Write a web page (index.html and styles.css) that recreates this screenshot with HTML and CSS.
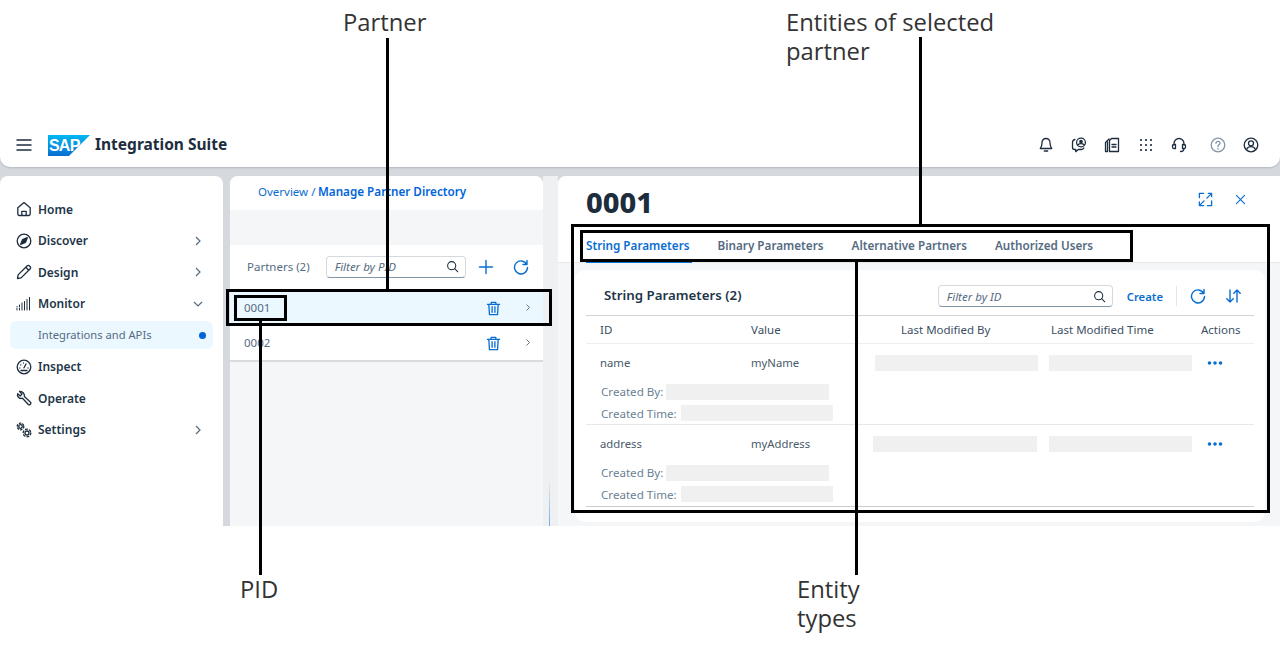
FILE: index.html
```html
<!DOCTYPE html>
<html lang="en">
<head>
<meta charset="utf-8">
<title>Partner Directory</title>
<link rel="stylesheet" href="styles.css">
</head>
<body>
<div class="figure">
  <div class="app">
    <header class="shell">
      <svg class="ic menu" viewBox="0 0 16 16"><path d="M1 3h14M1 8h14M1 13h14"/></svg>
      <svg class="logo" viewBox="0 0 42 21"><defs><linearGradient id="sapg" x1="0" y1="0" x2="0" y2="1"><stop offset="0" stop-color="#00b8f1"/><stop offset="1" stop-color="#0a6ed1"/></linearGradient></defs><path d="M0 0H42L21 21H0Z" fill="url(#sapg)"/><text x="1" y="16" class="logotext">SAP</text></svg>
      <span class="product">Integration Suite</span>
      <div class="shell-icons">
        <svg class="ic" viewBox="0 0 16 16"><path d="M8 1.500c-2.600 0-4 1.900-4 4.300 0 3-.6 4.200-1.700 5.700h11.400C12.600 10 12 8.800 12 5.800c0-2.400-1.400-4.300-4-4.300ZM6.300 14h3.400"/></svg>
        <svg class="ic" viewBox="0 0 16 16"><path d="M4 2.500C2.600 2.800 1.500 3.800 1.500 5.500v5c0 1.300 1 2 2.200 2h1v2.200l2.600-2.200h3.200c1.200 0 2-.6 2.300-1.600"/><circle cx="10" cy="5.500" r="4.400"/><path d="M7 7.800c1.500-1.500 4.500-1.500 6 0"/><circle cx="10" cy="4.600" r="1.200" class="solid"/></svg>
        <svg class="ic" viewBox="0 0 16 16"><path d="M7.500 1.500h7v13h-9V3.500ZM1.500 14.500V5.500L5 2M8 7.500h4M8 10h4M1.500 14.500h2M3.500 14.500V5"/></svg>
        <svg class="ic dots" viewBox="0 0 16 16"><path d="M3 3h.01M8 3h.01M13 3h.01M3 8h.01M8 8h.01M13 8h.01M3 13h.01M8 13h.01M13 13h.01"/></svg>
        <svg class="ic" viewBox="0 0 16 16"><path d="M3 8V6.500a5 5 0 0 1 10 0V8M2.700 7.500C1.800 7.500 1.500 8 1.500 9v1c0 1 .5 1.500 1.200 1.500H4.500V7.500ZM11.500 7.500h1.800c.7 0 1.200.5 1.200 1.500v1c0 1-.5 1.500-1.200 1.500h-1.800ZM13 11.500c0 1.800-1.500 3-3.500 3"/></svg>
        <svg class="ic help" viewBox="0 0 16 16"><circle cx="8" cy="8" r="6.800"/><path d="M6 6.300C6 5 7 4.400 8 4.400s2 .7 2 1.800c0 1.600-2 1.600-2 3.300M8 11.300v.8"/></svg>
        <svg class="ic" viewBox="0 0 16 16"><circle cx="8" cy="8" r="6.800"/><circle cx="8" cy="6.300" r="2.500"/><path d="M3.500 12.500c1-2 2.600-2.800 4.500-2.800s3.500.8 4.500 2.800"/></svg>
      </div>
    </header>
    <div class="workspace">
      <nav class="side">
        <a class="nav"><svg class="ic" viewBox="0 0 16 16"><path d="M1.800 6.800 8 1.500l6.200 5.300v6.200a1.500 1.500 0 0 1-1.500 1.500H3.300a1.500 1.500 0 0 1-1.500-1.500ZM5.800 14.500V10.300h4.400v4.200"/></svg><b>Home</b></a>
        <a class="nav"><svg class="ic" viewBox="0 0 16 16"><circle cx="8" cy="8" r="6.800"/><path d="M11.300 4.700 9.400 9.400 4.700 11.300 6.600 6.600Z" class="solid"/></svg><b>Discover</b><svg class="chev" viewBox="0 0 8 12"><path d="M2 2l4 4-4 4"/></svg></a>
        <a class="nav"><svg class="ic" viewBox="0 0 16 16"><path d="M1.500 14.500l.6-3.600L11 2a1.800 1.800 0 0 1 2.500 0l.5.500a1.800 1.800 0 0 1 0 2.500L5.100 13.900ZM9.800 3.200l3 3"/></svg><b>Design</b><svg class="chev" viewBox="0 0 8 12"><path d="M2 2l4 4-4 4"/></svg></a>
        <a class="nav"><svg class="ic thin" viewBox="0 0 16 16"><path d="M1 14v-1.500M3.500 14v-1.500M1 11v-.5M3.500 11V9M6 14V7M8.500 14V5.500M11 14V3.500M13.500 14V1.500"/></svg><b>Monitor</b><svg class="chev down" viewBox="0 0 12 8"><path d="M2 2l4 4 4-4"/></svg></a>
        <a class="sub"><span>Integrations and APIs</span><i class="dot"></i></a>
        <a class="nav"><svg class="ic" viewBox="0 0 16 16"><circle cx="8" cy="8" r="6.800"/><path d="M8 8.800 10 5M3.800 9h.01M4.800 6h.01M7.500 4h.01M12 9h.01M5 11.500h6"/></svg><b>Inspect</b></a>
        <a class="nav"><svg class="ic" viewBox="0 0 16 16"><path d="M3.500 1.500 6 4 4.200 6 1.700 3.600C1 6 2.500 8.500 5 8.500c.6 0 1.100-.1 1.500-.3l5.800 6.300a1.200 1.200 0 0 0 1.700 0l.5-.5a1.200 1.200 0 0 0 0-1.700L8.400 6.500C8.800 3.800 6.500 1 3.500 1.500Z"/></svg><b>Operate</b></a>
        <a class="nav"><svg class="ic" viewBox="0 0 16 16"><circle cx="4.500" cy="4.500" r="1.800"/><circle cx="4.500" cy="4.500" r="3.300" stroke-dasharray="1.500 2"/><circle cx="11" cy="11" r="2"/><circle cx="11" cy="11" r="3.800" stroke-dasharray="1.800 2.200"/></svg><b>Settings</b><svg class="chev" viewBox="0 0 8 12"><path d="M2 2l4 4-4 4"/></svg></a>
      </nav>
      <section class="list">
        <div class="crumbs"><span>Overview /</span> <strong>Manage Partner Directory</strong></div>
        <div class="band"></div>
        <div class="list-bar">
          <span class="count">Partners (2)</span>
          <label class="search narrow"><em>Filter by PID</em><svg class="ic" viewBox="0 0 16 16"><circle cx="7" cy="7" r="5"/><path d="M10.700 10.700 14.500 14.500"/></svg></label>
          <svg class="ic blue plus" viewBox="0 0 16 16"><path d="M8 1.500v13M1.500 8h13"/></svg>
          <svg class="ic blue refresh" viewBox="0 0 16 16"><path d="M13.700 5.300A6.500 6.500 0 1 0 14.500 8.500M14 1.500v4h-4"/></svg>
        </div>
        <div class="partner active"><span>0001</span><svg class="ic blue trash" viewBox="0 0 16 16"><path d="M1.500 3.500h13M5.500 3.500V1.500h5v2M3 3.500l.7 11h8.600l.7-11M6.500 6v6M9.500 6v6"/></svg><svg class="chev" viewBox="0 0 8 12"><path d="M2 2l4 4-4 4"/></svg></div>
        <div class="partner last"><span>0002</span><svg class="ic blue trash" viewBox="0 0 16 16"><path d="M1.500 3.500h13M5.500 3.500V1.500h5v2M3 3.500l.7 11h8.600l.7-11M6.500 6v6M9.500 6v6"/></svg><svg class="chev" viewBox="0 0 8 12"><path d="M2 2l4 4-4 4"/></svg></div>
      </section>
      <div class="splitter"></div>
      <section class="detail">
        <div class="detail-head">
          <h1>0001</h1>
          <div class="head-actions">
            <svg class="ic blue" viewBox="0 0 16 16"><path d="M6 1.500H1.500V6M14.500 9.500v5H10M1.500 10.500v4H6M9.500 6.500l5-5M11 1.500h3.500V5M6.500 9.500l-5 5M1.500 11v3.500H5"/></svg>
            <svg class="ic blue close" viewBox="0 0 16 16"><path d="M3 3l10 10M13 3 3 13"/></svg>
          </div>
        </div>
        <div class="tabs">
          <span class="tab on">String Parameters</span>
          <span class="tab">Binary Parameters</span>
          <span class="tab">Alternative Partners</span>
          <span class="tab">Authorized Users</span>
        </div>
        <div class="content">
          <div class="card">
            <div class="card-bar">
              <h2>String Parameters (2)</h2>
              <label class="search wide"><em>Filter by ID</em><svg class="ic" viewBox="0 0 16 16"><circle cx="7" cy="7" r="5"/><path d="M10.700 10.700 14.500 14.500"/></svg></label>
              <span class="create">Create</span>
              <i class="sep"></i>
              <svg class="ic blue refresh" viewBox="0 0 16 16"><path d="M13.700 5.300A6.500 6.500 0 1 0 14.500 8.500M14 1.500v4h-4"/></svg>
              <svg class="ic blue sort" viewBox="0 0 16 16"><path d="M5 2v12M1.800 10.800 5 14l3.200-3.200M12 14V2M8.800 5.200 12 2l3.200 3.200"/></svg>
            </div>
            <div class="row head"><span>ID</span><span>Value</span><span class="h3">Last Modified By</span><span class="h3">Last Modified Time</span><span>Actions</span></div>
            <div class="row item">
              <div class="main">
                <span>name</span><span>myName</span><i class="mask m1"></i><i class="mask m2"></i><svg class="more" viewBox="0 0 16 4"><circle cx="2.500" cy="2" r="1.800"/><circle cx="8" cy="2" r="1.800"/><circle cx="13.500" cy="2" r="1.800"/></svg>
              </div>
              <div class="meta"><span>Created By:</span><i class="mask a"></i></div>
              <div class="meta"><span>Created Time:</span><i class="mask b"></i></div>
            </div>
            <div class="row item">
              <div class="main">
                <span>address</span><span>myAddress</span><i class="mask"></i><i class="mask m2"></i><svg class="more" viewBox="0 0 16 4"><circle cx="2.500" cy="2" r="1.800"/><circle cx="8" cy="2" r="1.800"/><circle cx="13.500" cy="2" r="1.800"/></svg>
              </div>
              <div class="meta"><span>Created By:</span><i class="mask a"></i></div>
              <div class="meta"><span>Created Time:</span><i class="mask b"></i></div>
            </div>
          </div>
        </div>
      </section>
    </div>
  </div>

  <div class="note n-partner">Partner</div>
  <div class="note n-entities">Entities of selected<br>partner</div>
  <div class="note n-pid">PID</div>
  <div class="note n-types">Entity<br>types</div>
  <i class="vline l-partner"></i>
  <i class="vline l-entities"></i>
  <i class="vline l-pid"></i>
  <i class="vline l-types"></i>
  <i class="box b-row"></i>
  <i class="box b-pid"></i>
  <i class="box b-entities"></i>
  <i class="box b-tabs"></i>
</div>
</body>
</html>
```
FILE: styles.css
```css
* { box-sizing: border-box; }
html, body { margin: 0; background: #fff; }
body { font-family: "Noto Sans", "Open Sans", sans-serif; color: #1d2d3e; }
.figure { position: relative; width: 1280px; height: 647px; padding-top: 123px; overflow: hidden; }
.app { height: 403px; display: flex; flex-direction: column; background: #d5d9dd; overflow: hidden; }

.ic { width: 16px; height: 16px; flex: none; fill: none; stroke: #1d2d3e; stroke-width: 1.300; stroke-linecap: round; stroke-linejoin: round; }
.ic.blue { stroke: #0a6ed1; stroke-width: 1.400; }
.ic .solid { fill: #1d2d3e; }
.chev { width: 8px; height: 12px; flex: none; fill: none; stroke: #556b82; stroke-width: 1.200; }

.shell { height: 44px; flex: none; background: #fff; border-radius: 0 0 10px 10px; display: flex; align-items: center; padding: 0 21px 0 16px; box-shadow: 0 1px 2px rgba(80,90,100,.25); position: relative; }
.menu { stroke-width: 1.400; }
.logo { width: 42px; height: 21px; margin-left: 16px; flex: none; }
.logotext { font: 700 16px "Liberation Sans", sans-serif; fill: #fff; letter-spacing: -.8px; }
.product { margin-left: 5px; padding-bottom: 2px; font-size: 15.500px; font-weight: 700; color: #1d2d3e; white-space: nowrap; }
.shell-icons { margin-left: auto; display: flex; align-items: center; gap: 17.400px; }
.shell-icons .dots { stroke-width: 2.200; }
.shell-icons .help { stroke: #8696a9; margin-left: 5px; }

.workspace { flex: 1; min-height: 0; display: flex; padding-top: 9px; }
.side { width: 223px; flex: none; background: #fff; border-radius: 8px 8px 0 0; padding: 17.500px 10px 0; }
.nav { height: 31.500px; display: flex; align-items: center; padding: 0 10px 0 6px; }
.nav b { margin-left: 6px; font-size: 12px; font-weight: 600; color: #223548; flex: 1; }
.nav .chev { margin-right: 1px; }
.nav .down { width: 12px; height: 8px; margin-right: -1px; }
.thin { stroke-width: 1; }
.sub { height: 28px; margin: 1.500px 0 2px; padding: 0 7px 2px 28px; background: #ebf8ff; border-radius: 6px; display: flex; align-items: center; justify-content: space-between; font-size: 11.200px; color: #556b82; }
.dot { width: 7px; height: 7px; border-radius: 50%; background: #0064d9; margin-top: 2px; }

.list { width: 313px; flex: none; margin-left: 7px; background: #f5f6f7; border-radius: 8px 8px 0 0; overflow: hidden; }
.crumbs { height: 34px; background: #fff; padding: 0 0 4px 28px; display: flex; align-items: center; gap: 2.500px; font-size: 11.500px; color: #0a6ed1; white-space: nowrap; }
.crumbs strong { font-size: 11.700px; font-weight: 600; color: #0064d9; }
.band { height: 35px; }
.list-bar { height: 45px; background: #fff; display: flex; align-items: center; padding: 0 14px 2px 17px; }
.count { font-size: 11.500px; color: #556b82; white-space: nowrap; }
.search { display: flex; align-items: center; justify-content: space-between; height: 22px; background: #fff; border: 1px solid #d5dadd; border-bottom-color: #8396a8; border-radius: 4px; padding: 0 6px 0 8px; }
.search em { font-size: 11.500px; color: #556b82; }
.search .ic { width: 13px; height: 13px; }
.narrow { width: 140px; margin-left: 16px; }
.plus { margin-left: 12px; }
.list-bar .refresh { margin-left: 19px; }
.partner { height: 36px; background: #fff; display: flex; align-items: center; padding: 0 12px 2px 14px; font-size: 11.500px; color: #556b82; }
.partner span { flex: 1; }
.partner.active { background: #ebf8ff; }
.partner.last { border-bottom: 2px solid #d9dcdf; }
.partner .chev { width: 6px; height: 9px; }
.trash { width: 15px; height: 15px; margin: 2px 24px 0 0; }

.splitter { width: 15px; flex: none; background: #eef0f2; position: relative; }
.splitter::after { content: ""; position: absolute; left: 6px; bottom: 0; width: 1px; height: 48px; background: linear-gradient(#eef0f2, #7aa9e6); }
.detail { flex: 1; min-width: 0; background: #f5f6f7; border-radius: 8px 0 0 0; overflow: hidden; display: flex; flex-direction: column; }
.detail-head { height: 53px; flex: none; background: #fff; display: flex; align-items: center; justify-content: space-between; padding: 0 32px 0 28px; }
h1 { margin: 0 0 2px; font-size: 29px; font-weight: 800; line-height: 1; color: #1d2d3e; }
.head-actions { display: flex; align-items: center; gap: 20px; margin-bottom: 6px; }
.head-actions .ic { width: 15px; height: 15px; }
.head-actions .close { width: 13px; height: 13px; margin: 0 1px; }
.tabs { height: 34px; flex: none; background: #fff; display: flex; gap: 28px; padding: 0 0 0 28px; border-bottom: 1px solid #e5e8ea; }
.tab { height: 34px; display: flex; align-items: center; font-size: 11.700px; font-weight: 600; color: #556b82; padding-bottom: 2px; white-space: nowrap; }
.tab.on { color: #0a6ed1; border-bottom: 3px solid #0a6ed1; padding: 0 2px 0 0; margin-right: -2px; margin-bottom: -1px; }
.content { flex: 1; min-height: 0; padding: 7px 15px 4px 17px; }
.card { height: 100%; background: #fff; border-radius: 10px; padding: 0 11px; }
.card-bar { height: 46px; display: flex; align-items: center; padding: 7px 13px 0 18px; border-bottom: 1px solid #cdd4da; }
h2 { margin: -3px auto 0 0; font-size: 13.300px; font-weight: 600; color: #223548; white-space: nowrap; }
.wide { width: 175px; margin-right: 14px; }
.create { font-size: 11.300px; font-weight: 600; color: #0a6ed1; }
.sep { width: 1px; height: 20px; margin: 0 13px; background: #e5e8ea; }
.sort { margin-left: 19px; }
.row { padding-left: 14px; font-size: 11.300px; color: #556b82; }
.head { height: 28px; display: grid; grid-template-columns: 151px 122px 176px 152px 1fr; align-items: center; font-size: 11.500px; color: #3c4f63; border-bottom: 1px solid #eceef0; }
.h3 { padding-left: 28px; white-space: nowrap; }
.h3 + .h3 { padding-left: 2px; }
.item { height: 81px; border-bottom: 1px solid #e5e8ea; }
.item + .item { height: 82px; border-bottom-color: #c8ced4; }
.main { height: 37px; display: grid; grid-template-columns: 151px 122px 176px 143px 1fr; align-items: center; color: #4a5a6b; }
.mask { display: block; height: 16px; background: #f0f0f0; }
.main .mask { width: 164px; }
.main .m1 { margin-left: 2px; width: 163px; }
.main .m2 { width: 143px; }
.more { width: 16px; height: 4px; margin-left: 15px; fill: #0a6ed1; }
.meta { height: 21.500px; display: flex; align-items: center; padding-left: 1px; font-size: 11.600px; color: #6a7f95; white-space: nowrap; }
.meta .a { width: 163px; margin-left: 3px; }
.meta .b { width: 152px; margin-left: 4px; }

.note { position: absolute; font-family: "Open Sans", sans-serif; font-size: 23.800px; line-height: 28.500px; color: #333; white-space: nowrap; }
.n-partner { left: 343px; top: 8px; }
.n-entities { left: 786px; top: 8px; }
.n-pid { left: 240px; top: 575px; }
.n-types { left: 797px; top: 575px; }
.vline { position: absolute; width: 3px; background: #000; }
.l-partner { left: 386px; top: 38px; height: 252px; }
.l-entities { left: 919px; top: 37px; height: 188px; }
.l-pid { left: 259px; top: 320px; height: 255px; }
.l-types { left: 855px; top: 262px; height: 313px; }
.box { position: absolute; border: 3px solid #000; }
.b-row { left: 226px; top: 289px; width: 326px; height: 37px; }
.b-pid { left: 234px; top: 295px; width: 53px; height: 26px; }
.b-entities { left: 571px; top: 224px; width: 699px; height: 289px; }
.b-tabs { left: 580px; top: 230px; width: 553px; height: 32px; }
```
